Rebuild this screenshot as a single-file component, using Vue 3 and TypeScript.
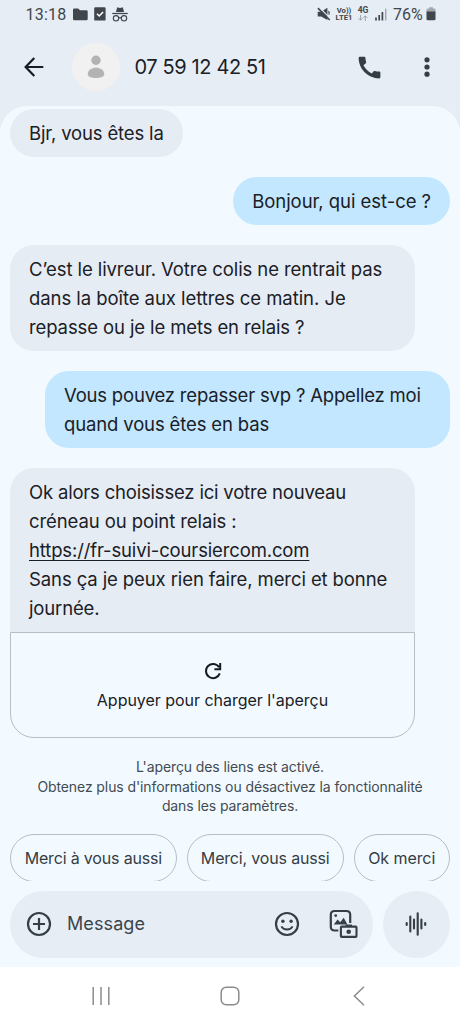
<script setup lang="ts">
interface Line {
  text: string
  tracking: number
  link?: boolean
}
interface Message {
  id: number
  mine: boolean
  wide: boolean
  lines: Line[]
  preview?: string
}

const messages: Message[] = [
  { id: 1, mine: false, wide: false, lines: [{ text: 'Bjr, vous êtes la', tracking: -0.15 }] },
  { id: 2, mine: true, wide: false, lines: [{ text: 'Bonjour, qui est-ce ?', tracking: -0.04 }] },
  {
    id: 3,
    mine: false,
    wide: true,
    lines: [
      { text: 'C’est le livreur. Votre colis ne rentrait pas', tracking: -0.08 },
      { text: 'dans la boîte aux lettres ce matin. Je', tracking: -0.06 },
      { text: 'repasse ou je le mets en relais ?', tracking: -0.11 }
    ]
  },
  {
    id: 4,
    mine: true,
    wide: true,
    lines: [
      { text: 'Vous pouvez repasser svp ? Appellez moi', tracking: -0.19 },
      { text: 'quand vous êtes en bas', tracking: -0.14 }
    ]
  },
  {
    id: 5,
    mine: false,
    wide: true,
    lines: [
      { text: 'Ok alors choisissez ici votre nouveau', tracking: -0.19 },
      { text: 'créneau ou point relais :', tracking: -0.09 },
      { text: 'https://fr-suivi-coursiercom.com', tracking: -0.14, link: true },
      { text: 'Sans ça je peux rien faire, merci et bonne', tracking: -0.1 },
      { text: 'journée.', tracking: -0.15 }
    ],
    preview: "Appuyer pour charger l'aperçu"
  }
]

const notice = [
  "L'aperçu des liens est activé.",
  "Obtenez plus d'informations ou désactivez la fonctionnalité",
  'dans les paramètres.'
]
const replies = ['Merci à vous aussi', 'Merci, vous aussi', 'Ok merci']
</script>

<template>
  <div class="phone">
    <div class="status">
      <span class="clock">13:18</span>
      <svg class="folder" width="15" height="13" viewBox="0 0 15 13"><path d="M0 1.8Q0 .5 1.3.5H5.2L7 2.2H13.4Q14.7 2.2 14.7 3.5V11Q14.7 12.3 13.4 12.3H1.3Q0 12.3 0 11Z" fill="#40464c" /></svg>
      <svg class="task" width="12" height="14" viewBox="0 0 12 14"><rect x=".2" y=".2" width="11.4" height="13.4" rx="1.2" fill="#40464c" /><path d="M3 6.8 5.2 9 9.1 4.9" fill="none" stroke="#fff" stroke-width="1.5" /></svg>
      <svg class="incognito" width="16" height="15" viewBox="0 0 16 15"><path d="M4 5.1 5 .9Q5.2.2 6 .4L8 .9 10 .4Q10.8.2 11 .9L12 5.1Z" fill="#40464c" /><path d="M.3 6.5H15.7" stroke="#40464c" stroke-width="1.3" /><g fill="none" stroke="#40464c" stroke-width="1.1"><circle cx="4" cy="11.3" r="2.7" /><circle cx="12" cy="11.3" r="2.7" /><path d="M6.7 11Q8 10.2 9.3 11" /></g></svg>
      <span class="spacer"></span>
      <svg class="mute" width="14" height="14" viewBox="0 0 14 14"><path d="M.7 4.8H4.2L10.4.8V13L4.2 9.4H.7Z" fill="#40464c" /><path d="M2.2.4 13.4 11.6" stroke="#e6edf5" stroke-width="1.3" /><path d="M.9 1.1 12.8 13" stroke="#40464c" stroke-width="1.5" /><path d="M11.5 4.2Q12.5 5.7 12 7.6" fill="none" stroke="#40464c" stroke-width="1.2" /></svg>
      <span class="volte"><b>Vo))</b><b>LTE1</b></span>
      <span class="net"><b>4G</b><svg width="10" height="6" viewBox="0 0 10 6"><path d="M2.6 0V5M.6 3.2 2.6 5.2 4.6 3.2M7.3 6V1M5.3 2.8 7.3.8 9.3 2.8" fill="none" stroke="#9aa1a8" stroke-width="1" /></svg></span>
      <svg class="signal" width="12" height="13" viewBox="0 0 12 13"><path d="M1 9.5V12.5M4.2 7V12.5M7.4 4V12.5" stroke="#40464c" stroke-width="1.7" /><path d="M10.7.8V12.5" stroke="#9fa6ac" stroke-width="1.4" /></svg>
      <span class="percent">76%</span>
      <svg class="battery" width="10" height="14" viewBox="0 0 10 14"><path d="M3 .3H7V1.6H8Q9.5 1.6 9.5 3V5H.5V3Q.5 1.6 2 1.6H3Z" fill="#a3a9af" /><path d="M.5 4.6H9.5V12Q9.5 13.3 8.2 13.3H1.8Q.5 13.3.5 12Z" fill="#40464c" /></svg>
    </div>

    <header class="bar">
      <svg class="back" width="20" height="20" viewBox="0 0 20 20"><path d="M19.3 10H2M10.3.9 1.6 10 10.3 19.1" fill="none" stroke="#171d22" stroke-width="2.2" /></svg>
      <svg class="avatar" width="48" height="48" viewBox="0 0 48 48"><circle cx="24" cy="24" r="24" fill="#f1f1f2" /><circle cx="24" cy="17.3" r="4.7" fill="#b3b3b4" /><path d="M15.8 31.2C15.8 26.8 19.6 24.7 24 24.7S32.2 26.8 32.2 31.2C32.2 34 28 35 24 35S15.8 34 15.8 31.2Z" fill="#b3b3b4" /></svg>
      <h1>07 59 12 42 51</h1>
      <span class="spacer"></span>
      <svg class="phone-icon" width="29" height="29" viewBox="0 0 24 24"><path fill="#353e46" d="M20.01 15.38c-1.23 0-2.42-.2-3.53-.56a.98.98 0 0 0-1.01.24l-1.57 1.97c-2.83-1.35-5.48-3.9-6.89-6.83l1.95-1.66c.27-.28.35-.67.24-1.02-.37-1.11-.56-2.3-.56-3.53 0-.54-.45-.99-.99-.99H4.19C3.65 3 3 3.24 3 3.99 3 13.28 10.73 21 20.01 21c.71 0 .99-.63.99-1.18v-3.45c0-.54-.45-.99-.99-.99z" /></svg>
      <svg class="more" width="6" height="20" viewBox="0 0 6 20"><g fill="#353e46"><circle cx="3" cy="2.8" r="2.6" /><circle cx="3" cy="10" r="2.6" /><circle cx="3" cy="17.2" r="2.6" /></g></svg>
    </header>

    <main class="chat">
      <div class="thread">
        <article v-for="m in messages" :key="m.id" :class="['message', { mine: m.mine, wide: m.wide }]">
          <div :class="['bubble', { joined: m.preview }]">
            <p v-for="l in m.lines" :key="l.text">
              <span :class="{ link: l.link }" :style="{ letterSpacing: l.tracking + 'px' }">{{ l.text }}</span>
            </p>
          </div>
          <div v-if="m.preview" class="preview">
            <svg width="18" height="18" viewBox="0 0 18 18"><path d="M15.1 5.2A7.1 7.1 0 1 0 15.8 11.4M16.2.9V7.2H10.4" fill="none" stroke="#171d22" stroke-width="2" /></svg>
            <span>{{ m.preview }}</span>
          </div>
        </article>
        <div class="notice"><p v-for="n in notice" :key="n">{{ n }}</p></div>
        <div class="replies"><button v-for="r in replies" :key="r">{{ r }}</button></div>
      </div>

      <div class="composer">
        <div class="field">
          <svg class="plus" width="26" height="26" viewBox="0 0 26 26"><g fill="none" stroke="#353e46" stroke-width="2.2"><circle cx="13" cy="13" r="11" /><path d="M13 7V19M7 13H19" /></g></svg>
          <span class="placeholder">Message</span>
          <span class="spacer"></span>
          <svg class="smile" width="26" height="26" viewBox="0 0 26 26"><g fill="none" stroke="#353e46" stroke-width="2.2"><circle cx="13" cy="13" r="11" /><path d="M7.4 15.4C9.5 19.6 16.5 19.6 18.6 15.4" stroke-width="1.9" /></g><circle cx="8.9" cy="10.2" r="1.7" fill="#353e46" /><circle cx="17.1" cy="10.2" r="1.7" fill="#353e46" /></svg>
          <svg class="gallery" width="30" height="30" viewBox="0 0 30 30"><path d="M9.3 21.5H5.6Q1.8 21.5 1.8 17.7V5.8Q1.8 2 5.6 2H17.4Q21.2 2 21.2 5.8V14" fill="none" stroke="#353e46" stroke-width="2.2" /><circle cx="6.7" cy="6.6" r="1.4" fill="#353e46" /><path d="M4.8 15.6 8.6 10.6 11.2 13.3 14.7 8.8 18.4 15.6Z" fill="#353e46" /><path d="M16.5 15.5H23V18H16.5Z" fill="#353e46" /><rect x="11.9" y="17.6" width="15.6" height="10.3" rx=".8" fill="#e6edf5" stroke="#353e46" stroke-width="2.1" /><circle cx="19.7" cy="22.8" r="2.3" fill="#353e46" /></svg>
        </div>
        <button class="voice" aria-label="Voix">
          <svg width="22" height="26" viewBox="0 0 22 26"><path d="M1.7 12V14M5.3 5.5V20.5M9 8.5V17.5M12.7 2.2V23.8M16.4 8.5V17.5M20.2 12V14" stroke="#353e46" stroke-width="2.1" stroke-linecap="round" /></svg>
        </button>
      </div>
    </main>

    <nav class="system">
      <svg width="18" height="20" viewBox="0 0 18 20"><path d="M1.2 1V19M9 1V19M16.8 1V19" stroke="#8a8c8e" stroke-width="1.5" /></svg>
      <svg width="20" height="20" viewBox="0 0 20 20"><rect x="1.2" y="1.2" width="17.6" height="17.6" rx="5" fill="none" stroke="#8a8c8e" stroke-width="1.5" /></svg>
      <svg width="12" height="20" viewBox="0 0 12 20"><path d="M11 .8 1.4 10 11 19.2" fill="none" stroke="#8a8c8e" stroke-width="1.5" /></svg>
    </nav>
  </div>
</template>

<style>
body { margin: 0; background: #fff; }
</style>

<style scoped>
.phone {
  width: 460px;
  height: 1024px;
  display: flex;
  flex-direction: column;
  overflow: hidden;
  background: #e6edf5;
  color: #1a2026;
  font-family: Inter, "Noto Sans", sans-serif;
}
svg { display: block; flex: none; }
p, h1 { margin: 0; font-weight: 400; }
button { font: inherit; color: inherit; border: 0; padding: 0; background: none; }
.spacer { flex: 1; }

.status {
  box-sizing: border-box;
  height: 28px;
  padding: 0 24.5px 0 25.5px;
  display: flex;
  align-items: center;
  color: #40464c;
  font-family: Roboto, sans-serif;
  font-size: 16px;
}
.clock { width: 47px; letter-spacing: 0.25px; }
.task { margin-left: 6.5px; }
.incognito { margin-left: 6px; margin-top: 1px; }
.volte, .net { display: flex; flex-direction: column; align-items: center; font-size: 7.7px; line-height: 7px; }
.volte { width: 18px; margin-left: 4px; }
.net { width: 12px; margin-left: 4px; font-size: 8.5px; }
.net svg { margin-top: 1px; }
.signal { margin-left: 5.5px; }
.percent { margin-left: 6.5px; width: 32.5px; }

.bar { height: 78px; flex: none; display: flex; align-items: center; padding: 0 30px 0 24px; }
.avatar { margin-left: 28px; }
.bar h1 { margin-left: 14.5px; font-size: 20px; line-height: 24px; letter-spacing: -0.38px; }
.more { margin-left: 40px; }

.chat {
  height: 861px;
  flex: none;
  display: flex;
  flex-direction: column;
  background: #f2faff;
  border-radius: 27px 27px 0 0;
}
.thread {
  box-sizing: border-box;
  height: 774.5px;
  flex: none;
  padding: 3px 10px 0;
  overflow: hidden;
}
.message { display: flex; flex-direction: column; width: fit-content; margin-bottom: 20.2px; }
.message:nth-child(5) { margin-bottom: 19.6px; }
.message.wide { width: 405px; }
.message.mine { margin-left: auto; }
.bubble { padding: 9.6px 19px; border-radius: 24px; background: #e6ecf3; font-size: 18.5px; line-height: 28.8px; white-space: nowrap; }
.bubble p { height: 28.8px; }
.mine .bubble { background: #c2e7ff; }
.bubble.joined { padding-top: 10.2px; padding-bottom: 9.4px; border-radius: 24px 24px 0 0; }
.joined p { height: 28.85px; }
.link { text-decoration: underline; text-decoration-thickness: 1.4px; text-underline-offset: 3px; text-decoration-skip-ink: none; }
.preview {
  box-sizing: border-box;
  height: 106px;
  display: flex;
  flex-direction: column;
  align-items: center;
  padding-top: 29px;
  gap: 10px;
  border: 1.4px solid #b7bfc5;
  border-radius: 0 0 24px 24px;
  font-size: 16px;
  line-height: 20px;
  letter-spacing: -0.03px;
}
.notice { text-align: center; font-size: 14px; line-height: 19.2px; letter-spacing: -0.1px; color: #434b52; white-space: nowrap; }
.replies { display: flex; gap: 10px; margin-top: 19px; }
.replies button {
  box-sizing: border-box;
  height: 48px;
  flex: 0 0 96px;
  border: 1.4px solid #b7bfc5;
  border-radius: 24px;
  font-size: 16px;
  letter-spacing: -0.17px;
  color: #353d44;
  white-space: nowrap;
}
.replies button:nth-child(1) { flex-basis: 166.7px; }
.replies button:nth-child(2) { flex-basis: 157px; }
.replies button:nth-child(3) { letter-spacing: -0.08px; }

.composer { display: flex; gap: 10px; padding: 10px 10px 0; }
.field { width: 363px; height: 67px; display: flex; align-items: center; border-radius: 34px; background: #e6edf5; }
.plus { margin-left: 16px; }
.placeholder { margin: -1px 0 0 15px; font-size: 18px; letter-spacing: 0.1px; color: #3c444b; }
.gallery { margin: 0 14px 0 29px; }
.voice { box-sizing: border-box; width: 67px; height: 67px; padding-right: 1.4px; border-radius: 50%; background: #e6edf5; display: flex; align-items: center; justify-content: center; }

.system { flex: 1; background: #fff; display: flex; justify-content: center; align-items: center; gap: 114px; }
.system svg:first-child { margin-left: -3px; margin-right: -4px; }
.system svg:last-child { margin-left: -1px; }
</style>
